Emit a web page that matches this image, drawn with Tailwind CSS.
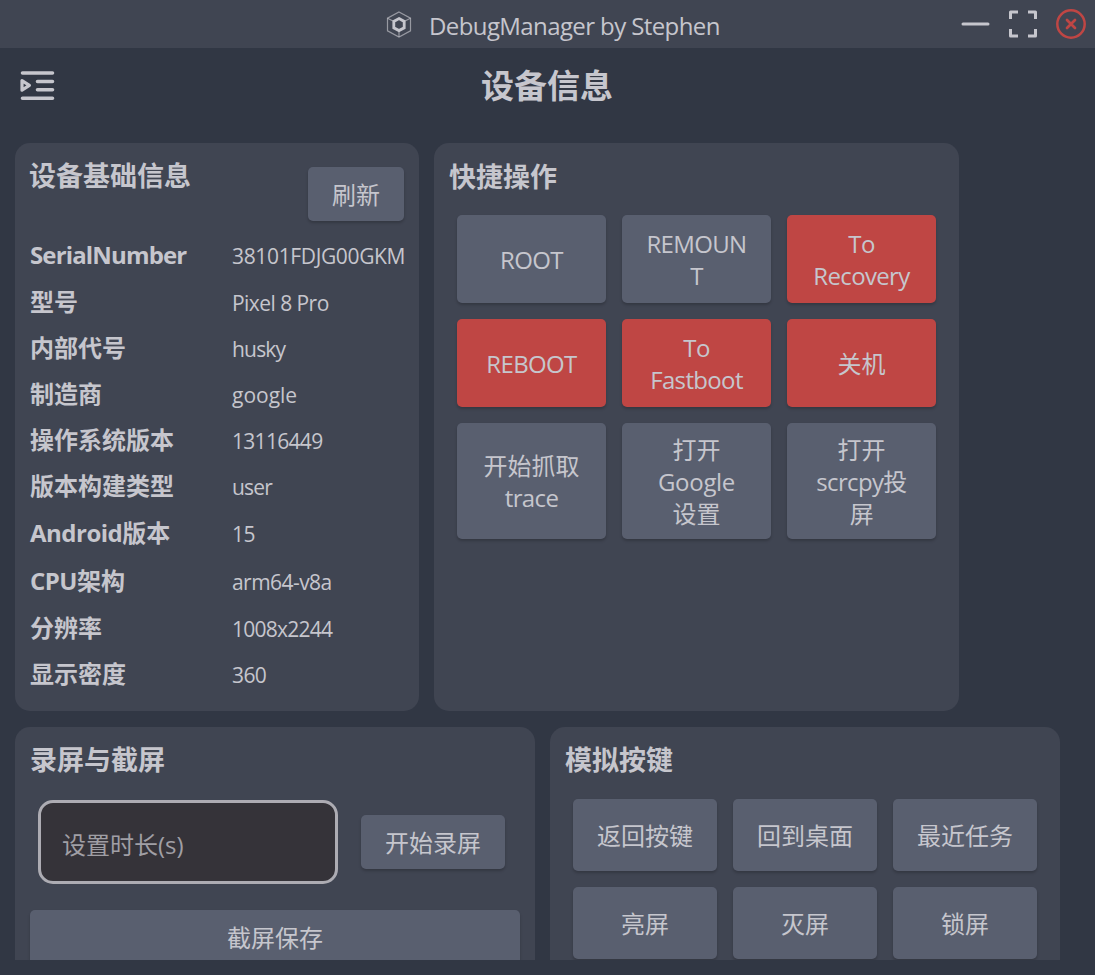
<!DOCTYPE html>
<html lang="zh-CN">
<head>
<meta charset="utf-8">
<title>DebugManager by Stephen</title>
<script src="https://cdn.jsdelivr.net/npm/@tailwindcss/browser@4"></script>
</head>
<body class="h-[975px] overflow-hidden bg-[#313744] font-['Open_Sans','Noto_Sans_CJK_SC',sans-serif] text-[24px] text-[#c6c6cd]">
<div class="flex h-[960px] flex-col overflow-hidden">
  <header class="flex h-12 shrink-0 items-center bg-[#404552]">
    <div class="flex flex-1 items-center pl-[386px]">
      <svg class="h-[27px] w-[26px] shrink-0" viewBox="0 0 26 27" fill="none" stroke="currentColor">
        <path d="M13 1L24.500 7.200V19.800L13 26L1.500 19.800V7.200Z" stroke-width="1.200" stroke-opacity="0.65"/>
        <path d="M13 7.600L18.200 10.400V16.800L13 19.600L7.800 16.800V10.400Z" stroke-width="2.800"/>
        <path d="M1.500 7.200L7 10M24.500 7.200L19 10M13 20V26" stroke-width="1.200" stroke-opacity="0.65"/>
      </svg>
      <span class="ml-[17px] w-[321px] whitespace-nowrap pt-[3px] leading-8 tracking-[-0.600px]">DebugManager by Stephen</span>
    </div>
    <div class="flex items-center">
      <svg class="h-8 w-[30px]" viewBox="0 0 30 32"><path d="M3 16H28" stroke="currentColor" stroke-width="3" stroke-linecap="round"/></svg>
      <svg class="ml-[17px] h-8 w-8" viewBox="0 0 32 32" fill="none" stroke="currentColor" stroke-width="3" stroke-linejoin="round"><path d="M3.500 11V4H11M21 4H28.500V11M28.500 21V28H21M11 28H3.500V21"/></svg>
      <svg class="mr-2 ml-4 h-8 w-8" viewBox="0 0 32 32" fill="none" stroke="#bf4644" stroke-linecap="round"><circle cx="16" cy="16" r="13.700" stroke-width="2.500"/><path d="M12 12L20 20M20 12L12 20" stroke-width="2.700"/></svg>
    </div>
  </header>

  <div class="flex h-[95px] shrink-0 pt-[19px]">
    <svg class="ml-5 h-[38px] w-9 shrink-0" viewBox="0 0 36 38" fill="none" stroke="currentColor" stroke-width="3.600" stroke-linecap="round" stroke-linejoin="round">
      <path d="M2.500 6H32.500M17.500 14.500H32.500M17.500 22.800H32.500M2.500 31.200H32.500"/><path d="M2 13.600V23.200L9.400 18.400Z" stroke-width="3.200"/>
    </svg>
    <h1 class="ml-[425px] text-[33px] font-bold leading-[38px]">设备信息</h1>
  </div>

  <div class="flex h-[568px] shrink-0 gap-[15px] px-[15px]">
    <section class="w-[404px] rounded-[15px] bg-[#404552] px-[15px] pt-[15px]">
      <div class="flex h-[75px] justify-between">
        <h2 class="-ml-px text-[27px] font-bold leading-[35px]">设备基础信息</h2>
        <button class="mt-[9px] h-[54px] w-24 rounded-[5px] bg-[#595f6f] pt-[2px] shadow-[0_2px_3px_rgba(0,0,0,0.2)]">刷新</button>
      </div>
      <dl class="whitespace-nowrap [&_dt]:w-[202px] [&_dt]:shrink-0 [&_dt]:pb-[2px] [&_dt]:font-bold [&_dd]:text-[21px] [&>div]:flex [&>div]:items-center [&_dt]:leading-8 [&_dd]:leading-8">
        <div class="h-[46px]"><dt class="tracking-[-0.850px]">SerialNumber</dt><dd class="tracking-[-0.350px]">38101FDJG00GKM</dd></div>
        <div class="h-[47px]"><dt>型号</dt><dd class="tracking-[-0.550px]">Pixel 8 Pro</dd></div>
        <div class="h-[46px]"><dt>内部代号</dt><dd class="tracking-[-0.800px]">husky</dd></div>
        <div class="h-[46px]"><dt>制造商</dt><dd>google</dd></div>
        <div class="h-[46px]"><dt>操作系统版本</dt><dd class="tracking-[-0.700px]">13116449</dd></div>
        <div class="h-[46px]"><dt>版本构建类型</dt><dd class="tracking-[-0.800px]">user</dd></div>
        <div class="h-[48px]"><dt><span class="tracking-[-0.500px]">Android</span>版本</dt><dd class="tracking-[-0.600px]">15</dd></div>
        <div class="h-[47px]"><dt><span class="tracking-[-0.500px]">CPU</span>架构</dt><dd class="tracking-[-0.550px]">arm64-v8a</dd></div>
        <div class="h-[47px]"><dt>分辨率</dt><dd class="tracking-[-0.750px]">1008x2244</dd></div>
        <div class="h-[46px]"><dt>显示密度</dt><dd class="tracking-[-0.600px]">360</dd></div>
      </dl>
    </section>

    <section class="w-[525px] rounded-[15px] bg-[#404552] px-[15px] pt-4">
      <h2 class="text-[27px] font-bold leading-[35px]">快捷操作</h2>
      <div class="mt-[21px] ml-2 grid w-[479px] grid-cols-3 grid-rows-[88px_88px_116px] gap-4 [&>button]:rounded-[5px] [&>button]:pt-[2px] [&>button]:leading-8 [&>button]:tracking-[-0.650px] [&>button]:shadow-[0_2px_3px_rgba(0,0,0,0.2)]">
        <button class="bg-[#595f6f]">ROOT</button>
        <button class="bg-[#595f6f]">REMOUN<br>T</button>
        <button class="bg-[#bf4644]">To<br>Recovery</button>
        <button class="bg-[#bf4644]">REBOOT</button>
        <button class="bg-[#bf4644]">To<br>Fastboot</button>
        <button class="bg-[#bf4644]"><span class="tracking-normal">关机</span></button>
        <button class="bg-[#595f6f]"><span class="tracking-normal">开始抓取</span><br>trace</button>
        <button class="bg-[#595f6f]"><span class="tracking-normal">打开</span><br><span class="tracking-[-0.300px]">Google</span><br><span class="tracking-normal">设置</span></button>
        <button class="bg-[#595f6f]"><span class="tracking-normal">打开</span><br>scrcpy投<br>屏</button>
      </div>
    </section>
  </div>

  <div class="mt-4 flex shrink-0 gap-[15px] px-[15px]">
    <section class="h-[300px] w-[520px] rounded-[15px] bg-[#404552] px-[15px] pt-[15px]">
      <h2 class="text-[27px] font-bold leading-[35px]">录屏与截屏</h2>
      <div class="mt-[23px] flex items-center pl-2">
        <input class="h-[84px] w-[300px] rounded-[15px] border-3 border-[#adacb3] bg-[#353339] px-[21px] pt-1 placeholder:text-[#a09fa5]" placeholder="设置时长(s)">
        <button class="ml-[23px] h-[54px] w-36 rounded-[5px] bg-[#595f6f] pt-[2px] shadow-[0_2px_3px_rgba(0,0,0,0.2)]">开始录屏</button>
      </div>
      <button class="mt-[26px] h-[54px] w-full rounded-[5px] bg-[#595f6f] pt-[2px] shadow-[0_2px_3px_rgba(0,0,0,0.2)]">截屏保存</button>
    </section>
    <section class="h-[300px] w-[510px] rounded-[15px] bg-[#404552] px-[15px] pt-[15px]">
      <h2 class="text-[27px] font-bold leading-[35px]">模拟按键</h2>
      <div class="mt-[22px] ml-2 grid w-[464px] auto-rows-[72px] grid-cols-3 gap-4 [&>button]:rounded-[5px] [&>button]:bg-[#595f6f] [&>button]:pt-[2px] [&>button]:shadow-[0_2px_3px_rgba(0,0,0,0.2)]">
        <button>返回按键</button><button>回到桌面</button><button>最近任务</button>
        <button>亮屏</button><button>灭屏</button><button>锁屏</button>
      </div>
    </section>
  </div>
</div>
</body>
</html>
